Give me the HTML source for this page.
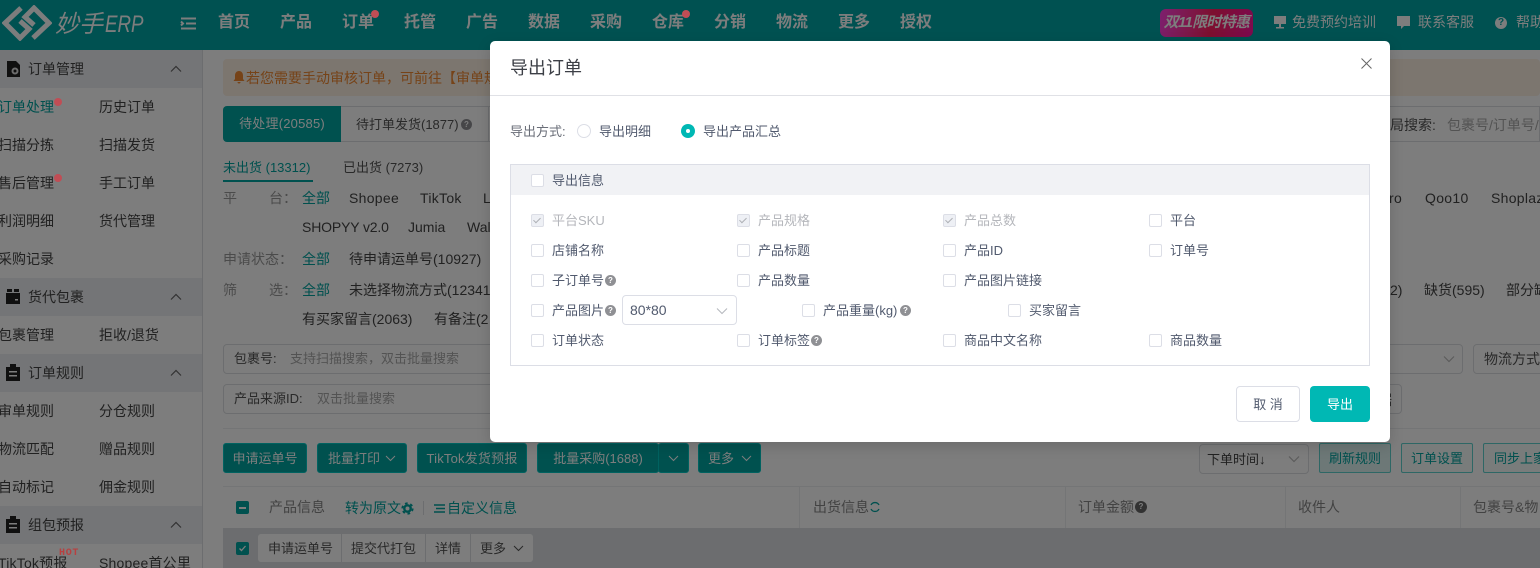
<!DOCTYPE html>
<html lang="zh">
<head>
<meta charset="utf-8">
<title>导出订单</title>
<style>
html,body{margin:0;padding:0;width:1540px;height:568px;overflow:hidden;background:#fff;}
body{position:relative;font-family:"Liberation Sans","Noto Sans CJK SC",sans-serif;font-size:14px;color:#555;}
.t{position:absolute;white-space:nowrap;line-height:20px;height:20px;margin-top:1px;}
.b{position:absolute;box-sizing:border-box;}
.s13{font-size:13px;}
.nav{color:#fff;font-size:16px;font-weight:700;top:12px;}
.top{color:#fff;font-size:14px;top:11px;}
.g{left:0;width:202px;height:38px;background:#eceef2;position:absolute;}
.m{color:#444;}
.tl{color:#00a4a0;}
.btn{position:absolute;box-sizing:border-box;height:30px;top:443px;background:#00a6a2;border:1px solid #00c8c4;border-radius:3px;color:#fff;font-size:13px;line-height:30px;text-align:center;white-space:nowrap;}
.out{position:absolute;box-sizing:border-box;height:30px;top:443px;background:#fff;border:1px solid #5fd2ce;border-radius:2px;color:#00a4a0;font-size:13px;line-height:30px;text-align:center;white-space:nowrap;overflow:hidden;}
.inp{position:absolute;box-sizing:border-box;border:1px solid #dcdee2;border-radius:4px;background:#fff;height:30px;}
.ov{position:absolute;left:0;top:0;width:1540px;height:568px;background:rgba(0,0,0,.51);}
.dlg{position:absolute;left:490px;top:41px;width:900px;height:401px;background:#fff;border-radius:5px;box-shadow:0 4px 14px rgba(0,0,0,.15);}
.cb{position:absolute;box-sizing:border-box;width:13px;height:13px;border:1px solid #dcdee6;border-radius:2px;background:#fff;}
.cb.dis{background:#eef0f5;}
.cb.dis:after{content:"";position:absolute;left:3px;top:1px;width:3px;height:6px;border:solid #aeb0b5;border-width:0 1px 1px 0;transform:rotate(45deg);}
.l{position:absolute;white-space:nowrap;font-size:13px;line-height:20px;height:20px;color:#515a6e;margin-top:1px;}
.l.dis{color:#b4b6bb;}
.q{position:absolute;width:11px;height:11px;border-radius:50%;background:#8f9094;color:#fff;font-size:8px;line-height:11px;text-align:center;font-weight:bold;}
.rdot{position:absolute;width:8px;height:8px;border-radius:50%;background:#c04d55;}
.chev{position:absolute;}
</style>
</head>
<body>
<!-- header -->
<div class="b" style="left:0;top:0;width:1540px;height:50px;background:#00a6a6;"></div>
<svg class="b" style="left:2px;top:5px;" width="50" height="36" viewBox="0 0 50 36" fill="none" stroke="#fff" stroke-width="5">
<path d="M19 3 L3 18 L18 33 L27 24 L18 16"/>
<path d="M31 33 L47 18 L32 3 L23 12 L32 20"/>
</svg>
<div class="t" style="left:55px;top:10px;font-size:24px;line-height:28px;height:28px;color:#fff;font-style:italic;">妙手<span style="display:inline-block;transform:scaleX(.78);transform-origin:left center;margin-left:2px;">ERP</span></div>
<svg class="b" style="left:180px;top:17px;" width="17" height="13" viewBox="0 0 17 13" fill="none" stroke="#fff" stroke-width="2"><path d="M1 1.500H16M6 6.500H16M1 11.500H16M1 4.500l2 2-2 2"/></svg>
<div class="t nav" style="left:218px;">首页</div>
<div class="t nav" style="left:280px;">产品</div>
<div class="t nav" style="left:342px;">订单</div>
<div class="t nav" style="left:404px;">托管</div>
<div class="t nav" style="left:466px;">广告</div>
<div class="t nav" style="left:528px;">数据</div>
<div class="t nav" style="left:590px;">采购</div>
<div class="t nav" style="left:652px;">仓库</div>
<div class="t nav" style="left:714px;">分销</div>
<div class="t nav" style="left:776px;">物流</div>
<div class="t nav" style="left:838px;">更多</div>
<div class="t nav" style="left:900px;">授权</div>
<div class="b" style="left:1160px;top:9px;width:93px;height:28px;border-radius:6px;background:linear-gradient(100deg,#ff40e0 0%,#ff3090 35%,#ff2060 55%,#ff14a0 100%);color:#fff;font-size:15px;font-weight:bold;font-style:italic;line-height:28px;text-align:center;white-space:nowrap;letter-spacing:-.7px;">双11限时特惠</div>
<svg class="b" style="left:1273px;top:15px;" width="14" height="15" viewBox="0 0 14 15" fill="#fff"><path d="M1 1h12v8H1z"/><path d="M6 9h2v3h3v1.500H3V12h3z"/></svg>
<div class="t top" style="left:1292px;">免费预约培训</div>
<svg class="b" style="left:1396px;top:15px;" width="15" height="15" viewBox="0 0 15 15" fill="#fff"><path d="M1 1h13v10H8l-3 3v-3H1z"/></svg>
<div class="t top" style="left:1418px;">联系客服</div>
<div class="b" style="left:1495px;top:17px;width:12px;height:12px;border-radius:50%;background:#fff;color:#00a6a6;font-size:10px;font-weight:bold;line-height:12px;text-align:center;">?</div>
<div class="t top" style="left:1516px;">帮助</div>

<!-- sidebar -->
<div class="b" style="left:202px;top:50px;width:1px;height:518px;background:#dcdee2;"></div>
<div class="g" style="top:50px;"></div>
<div class="g" style="top:278px;"></div>
<div class="g" style="top:354px;"></div>
<div class="g" style="top:506px;"></div>
<svg class="b" style="left:6px;top:60px;" width="15" height="18" viewBox="0 0 15 18"><path d="M1 1h9l4 4v12H1z" fill="#222"/><circle cx="9" cy="11" r="3.500" fill="#ddd"/><circle cx="9" cy="11" r="1.500" fill="#222"/></svg>
<svg class="b" style="left:5px;top:288px;" width="16" height="17" viewBox="0 0 16 17"><path d="M1 5h14v11H1z" fill="#222"/><path d="M2 1h5v3H2zM9 1h5v3H9z" fill="#222"/><path d="M10 11h3v1.500h-3z" fill="#fff"/></svg>
<svg class="b" style="left:6px;top:364px;" width="14" height="17" viewBox="0 0 14 17"><path d="M0 3h14v14H0z" fill="#222"/><path d="M4 0h6v3H4z" fill="#222"/><path d="M3 7h8v1.500H3zM3 11h8v1.500H3z" fill="#fff"/></svg>
<svg class="b" style="left:6px;top:516px;" width="14" height="17" viewBox="0 0 14 17"><path d="M0 3h14v14H0z" fill="#222"/><path d="M4 0h6v3H4z" fill="#222"/><path d="M3 7h8v1.500H3zM3 11h8v1.500H3z" fill="#fff"/></svg>
<div class="t m" style="left:28px;top:58px;">订单管理</div>
<div class="t m" style="left:28px;top:286px;">货代包裹</div>
<div class="t m" style="left:28px;top:362px;">订单规则</div>
<div class="t m" style="left:28px;top:514px;">组包预报</div>
<svg class="chev" style="left:170px;top:65px;" width="12" height="8" viewBox="0 0 12 8" fill="none" stroke="#666" stroke-width="1.2"><path d="M1 6.500l5-5 5 5"/></svg>
<svg class="chev" style="left:170px;top:293px;" width="12" height="8" viewBox="0 0 12 8" fill="none" stroke="#666" stroke-width="1.2"><path d="M1 6.500l5-5 5 5"/></svg>
<svg class="chev" style="left:170px;top:369px;" width="12" height="8" viewBox="0 0 12 8" fill="none" stroke="#666" stroke-width="1.2"><path d="M1 6.500l5-5 5 5"/></svg>
<svg class="chev" style="left:170px;top:521px;" width="12" height="8" viewBox="0 0 12 8" fill="none" stroke="#666" stroke-width="1.2"><path d="M1 6.500l5-5 5 5"/></svg>
<div class="t tl" style="left:-2px;top:96px;">订单处理</div>
<div class="t m" style="left:99px;top:96px;">历史订单</div>
<div class="t m" style="left:-2px;top:134px;">扫描分拣</div>
<div class="t m" style="left:99px;top:134px;">扫描发货</div>
<div class="t m" style="left:-2px;top:172px;">售后管理</div>
<div class="t m" style="left:99px;top:172px;">手工订单</div>
<div class="t m" style="left:-2px;top:210px;">利润明细</div>
<div class="t m" style="left:99px;top:210px;">货代管理</div>
<div class="t m" style="left:-2px;top:248px;">采购记录</div>
<div class="t m" style="left:-2px;top:324px;">包裹管理</div>
<div class="t m" style="left:99px;top:324px;">拒收/退货</div>
<div class="t m" style="left:-2px;top:400px;">审单规则</div>
<div class="t m" style="left:99px;top:400px;">分仓规则</div>
<div class="t m" style="left:-2px;top:438px;">物流匹配</div>
<div class="t m" style="left:99px;top:438px;">赠品规则</div>
<div class="t m" style="left:-2px;top:476px;">自动标记</div>
<div class="t m" style="left:99px;top:476px;">佣金规则</div>
<div class="t m" style="left:-2px;top:552px;letter-spacing:.2px;">TikTok预报</div>
<div class="t m" style="left:99px;top:552px;letter-spacing:.2px;">Shopee首公里</div>

<!-- main -->
<div class="b" style="left:223px;top:59px;width:1317px;height:37px;background:#fdf0e3;border-radius:4px;"></div>
<svg class="b" style="left:233px;top:71px;" width="12" height="13" viewBox="0 0 12 13" fill="#f08a32"><path d="M6 0c2.500 0 4 2 4 4.500V8l1.500 2H.5L2 8V4.500C2 2 3.500 0 6 0z"/><path d="M4.500 11h3a1.500 1.500 0 0 1-3 0z"/></svg>
<div class="t" style="left:246px;top:67px;font-size:14px;color:#f08a32;">若您需要手动审核订单，可前往【审单规则】</div>
<div class="b" style="left:223px;top:106px;width:118px;height:36px;background:#00a6a2;border-radius:4px 0 0 4px;color:#fff;font-size:13px;line-height:36px;text-align:center;letter-spacing:.2px;">待处理(20585)</div>
<div class="b" style="left:341px;top:106px;width:1199px;height:36px;border:1px solid #dcdee2;border-left:0;"></div>
<div class="b" style="left:488px;top:106px;width:1px;height:36px;background:#dcdee2;"></div>
<div class="t s13" style="left:356px;top:114px;">待打单发货(1877)</div>
<div class="q" style="left:461px;top:119px;">?</div>
<div class="t" style="left:1390px;top:114px;">局搜索:</div>
<div class="t" style="left:1447px;top:114px;color:#aaa;">包裹号/订单号/</div>
<div class="t s13 tl" style="left:223px;top:157px;">未出货 (13312)</div>
<div class="b" style="left:223px;top:180px;width:90px;height:2px;background:#00a6a2;"></div>
<div class="t s13" style="left:343px;top:157px;">已出货 (7273)</div>
<div class="t" style="left:223px;top:187px;color:#999;">平</div>
<div class="t" style="left:269px;top:187px;color:#999;">台：</div>
<div class="t tl" style="left:302px;top:187px;">全部</div>
<div class="t m" style="left:349px;top:187px;letter-spacing:.3px;">Shopee</div>
<div class="t m" style="left:420px;top:187px;letter-spacing:.3px;">TikTok</div>
<div class="t m" style="left:483px;top:187px;">L</div>
<div class="t m" style="left:1389px;top:187px;letter-spacing:.3px;">ro</div>
<div class="t m" style="left:1425px;top:187px;letter-spacing:.3px;">Qoo10</div>
<div class="t m" style="left:1491px;top:187px;letter-spacing:.3px;">Shoplaz</div>
<div class="t m" style="left:302px;top:216px;letter-spacing:-.15px;">SHOPYY v2.0</div>
<div class="t m" style="left:408px;top:216px;">Jumia</div>
<div class="t m" style="left:467px;top:216px;">Wal</div>
<div class="t" style="left:223px;top:248px;color:#999;">申请状态：</div>
<div class="t tl" style="left:302px;top:248px;">全部</div>
<div class="t m" style="left:349px;top:248px;">待申请运单号(10927)</div>
<div class="t" style="left:223px;top:279px;color:#999;">筛</div>
<div class="t" style="left:269px;top:279px;color:#999;">选：</div>
<div class="t tl" style="left:302px;top:279px;">全部</div>
<div class="t m" style="left:349px;top:279px;">未选择物流方式(12341</div>
<div class="t m" style="left:1390px;top:279px;">2)</div>
<div class="t m" style="left:1424px;top:279px;">缺货(595)</div>
<div class="t m" style="left:1506px;top:279px;">部分缺</div>
<div class="t m" style="left:302px;top:308px;">有买家留言(2063)</div>
<div class="t m" style="left:434px;top:308px;">有备注(2</div>

<div class="inp" style="left:223px;top:344px;width:1240px;"></div>
<div class="t s13" style="left:234px;top:348px;">包裹号:</div>
<div class="t s13" style="left:290px;top:348px;color:#aaa;">支持扫描搜索，双击批量搜索</div>
<svg class="chev" style="left:1443px;top:355px;" width="12" height="8" viewBox="0 0 12 8" fill="none" stroke="#bbb" stroke-width="1.2"><path d="M1 1.500l5 5 5-5"/></svg>
<div class="inp" style="left:1473px;top:344px;width:80px;"></div>
<div class="t" style="left:1484px;top:348px;">物流方式:</div>
<div class="inp" style="left:223px;top:384px;width:1179px;"></div>
<div class="t s13" style="left:234px;top:388px;">产品来源ID:</div>
<div class="t s13" style="left:317px;top:388px;color:#aaa;">双击批量搜索</div>
<div class="t" style="left:1378px;top:389px;">据</div>
<div class="b" style="left:223px;top:428px;width:1317px;height:1px;background:#eceef0;"></div>

<div class="btn" style="left:223px;width:84px;">申请运单号</div>
<div class="btn" style="left:317px;width:90px;text-align:left;padding-left:10px;">批量打印<svg style="position:absolute;left:67px;top:11px;" width="11" height="7" viewBox="0 0 11 7" fill="none" stroke="#fff"><path d="M1 1l4.500 4.500L10 1"/></svg></div>
<div class="btn" style="left:417px;width:110px;letter-spacing:.2px;">TikTok发货预报</div>
<div class="btn" style="left:537px;width:122px;">批量采购(1688)</div>
<div class="btn" style="left:658px;width:31px;"><svg style="position:absolute;left:9px;top:11px;" width="11" height="7" viewBox="0 0 11 7" fill="none" stroke="#fff"><path d="M1 1l4.500 4.500L10 1"/></svg></div>
<div class="btn" style="left:698px;width:63px;text-align:left;padding-left:9px;">更多<svg style="position:absolute;left:42px;top:11px;" width="11" height="7" viewBox="0 0 11 7" fill="none" stroke="#fff"><path d="M1 1l4.500 4.500L10 1"/></svg></div>

<div class="inp" style="left:1199px;top:444px;width:110px;"></div>
<div class="t s13" style="left:1207px;top:449px;color:#444;">下单时间↓</div>
<svg class="chev" style="left:1288px;top:455px;" width="12" height="8" viewBox="0 0 12 8" fill="none" stroke="#bbb" stroke-width="1.2"><path d="M1 1.500l5 5 5-5"/></svg>
<div class="out" style="left:1319px;width:72px;background:#dff5f3;">刷新规则</div>
<div class="out" style="left:1401px;width:72px;background:#f6fcfb;">订单设置</div>
<div class="out" style="left:1483px;width:90px;text-align:left;padding-left:10px;background:#f6fcfb;">同步上家</div>

<div class="b" style="left:223px;top:486px;width:1317px;height:42px;background:#fff;border-top:1px solid #eceef0;"></div>
<div class="b" style="left:236px;top:501px;width:13px;height:13px;background:#00a6a2;border-radius:2px;"></div>
<div class="b" style="left:239px;top:507px;width:7px;height:1.500px;background:#fff;"></div>
<div class="t" style="left:269px;top:496px;color:#888;">产品信息</div>
<div class="t tl" style="left:345px;top:497px;">转为原文</div>
<svg class="b" style="left:401px;top:502px;" width="13" height="13" viewBox="0 0 13 13" fill="none" stroke="#00a4a0"><circle cx="6.500" cy="6.500" r="3.200" stroke-width="2.400"/><circle cx="6.500" cy="6.500" r="5.200" stroke-width="1.800" stroke-dasharray="2.700 2.750"/></svg>
<div class="b" style="left:423px;top:501px;width:1px;height:14px;background:#dcdee2;"></div>
<svg class="b" style="left:434px;top:503px;" width="11" height="11" viewBox="0 0 11 11" fill="none" stroke="#00a4a0" stroke-width="1.600"><path d="M0 2h11M2 5.500h9M0 9h11"/></svg>
<div class="t tl" style="left:447px;top:497px;">自定义信息</div>
<div class="b" style="left:799px;top:487px;width:1px;height:41px;background:#eceef0;"></div>
<div class="t" style="left:813px;top:496px;color:#888;">出货信息</div>
<svg class="b" style="left:869px;top:501px;" width="12" height="12" viewBox="0 0 12 12" fill="none" stroke="#00a4a0" stroke-width="1.300"><path d="M10 4A4.500 4.500 0 0 0 2 4M2 8a4.500 4.500 0 0 0 8 0"/></svg>
<div class="b" style="left:1065px;top:487px;width:1px;height:41px;background:#eceef0;"></div>
<div class="t" style="left:1078px;top:496px;color:#888;">订单金额</div>
<div class="q" style="left:1135px;top:501px;width:12px;height:12px;line-height:12px;background:#666;">?</div>
<div class="b" style="left:1285px;top:487px;width:1px;height:41px;background:#eceef0;"></div>
<div class="t" style="left:1298px;top:496px;color:#888;">收件人</div>
<div class="b" style="left:1460px;top:487px;width:1px;height:41px;background:#eceef0;"></div>
<div class="t" style="left:1473px;top:496px;color:#888;">包裹号&amp;物</div>

<div class="b" style="left:223px;top:528px;width:1317px;height:40px;background:#dcdee3;"></div>
<div class="b" style="left:236px;top:542px;width:13px;height:13px;background:#00a6a2;border-radius:2px;"></div>
<svg class="b" style="left:236px;top:542px;" width="13" height="13" viewBox="0 0 13 13" fill="none" stroke="#fff" stroke-width="1.300"><path d="M3.500 6.500l2 2 4-4.500"/></svg>
<div class="b" style="left:258px;top:534px;width:275px;height:28px;background:#fff;border-radius:3px;"></div>
<div class="b" style="left:341px;top:534px;width:1px;height:28px;background:#dcdee3;"></div>
<div class="b" style="left:425px;top:534px;width:1px;height:28px;background:#dcdee3;"></div>
<div class="b" style="left:470px;top:534px;width:1px;height:28px;background:#dcdee3;"></div>
<div class="t s13" style="left:268px;top:538px;">申请运单号</div>
<div class="t s13" style="left:351px;top:538px;">提交代打包</div>
<div class="t s13" style="left:435px;top:538px;">详情</div>
<div class="t s13" style="left:480px;top:538px;">更多</div>
<svg class="chev" style="left:513px;top:545px;" width="11" height="7" viewBox="0 0 11 7" fill="none" stroke="#555"><path d="M1 1l4.500 4.500L10 1"/></svg>

<!-- overlay -->
<div class="ov"></div>

<!-- dots & hot drawn brighter -->
<div class="rdot" style="left:371px;top:10px;"></div>
<div class="rdot" style="left:682px;top:10px;"></div>
<div class="rdot" style="left:54px;top:98px;"></div>
<div class="rdot" style="left:54px;top:174px;"></div>
<div class="t" style="left:59px;top:547px;font-family:'Liberation Mono',monospace;font-size:10px;font-weight:bold;color:#b84040;letter-spacing:.7px;height:12px;line-height:12px;">HOT</div>

<!-- dialog -->
<div class="dlg"></div>
<div class="t" style="left:510px;top:55px;height:24px;line-height:24px;font-size:18px;color:#3c3f46;">导出订单</div>
<svg class="b" style="left:1361px;top:58px;" width="11" height="11" viewBox="0 0 11 11" fill="none" stroke="#666" stroke-width="1"><path d="M.5.5l10 10M10.500 .5l-10 10"/></svg>
<div class="b" style="left:490px;top:95px;width:900px;height:1px;background:#e0e1e6;"></div>
<div class="l" style="left:510px;top:121px;color:#6a6e78;">导出方式:</div>
<div class="b" style="left:577px;top:124px;width:14px;height:14px;border:1px solid #dcdee6;border-radius:50%;"></div>
<div class="l" style="left:599px;top:121px;">导出明细</div>
<div class="b" style="left:681px;top:124px;width:14px;height:14px;background:#00b8b4;border-radius:50%;"></div>
<div class="b" style="left:686px;top:129px;width:4px;height:4px;background:#fff;border-radius:50%;"></div>
<div class="l" style="left:703px;top:121px;">导出产品汇总</div>

<div class="b" style="left:510px;top:164px;width:860px;height:202px;border:1px solid #dcdee6;"></div>
<div class="b" style="left:511px;top:165px;width:858px;height:30px;background:#f1f2f5;"></div>
<div class="cb" style="left:531px;top:174px;"></div><div class="l" style="left:552px;top:170px;">导出信息</div>

<div class="cb dis" style="left:531px;top:214px;"></div><div class="l dis" style="left:552px;top:210px;">平台SKU</div>
<div class="cb dis" style="left:737px;top:214px;"></div><div class="l dis" style="left:758px;top:210px;">产品规格</div>
<div class="cb dis" style="left:943px;top:214px;"></div><div class="l dis" style="left:964px;top:210px;">产品总数</div>
<div class="cb" style="left:1149px;top:214px;"></div><div class="l" style="left:1170px;top:210px;">平台</div>

<div class="cb" style="left:531px;top:244px;"></div><div class="l" style="left:552px;top:240px;">店铺名称</div>
<div class="cb" style="left:737px;top:244px;"></div><div class="l" style="left:758px;top:240px;">产品标题</div>
<div class="cb" style="left:943px;top:244px;"></div><div class="l" style="left:964px;top:240px;">产品ID</div>
<div class="cb" style="left:1149px;top:244px;"></div><div class="l" style="left:1170px;top:240px;">订单号</div>

<div class="cb" style="left:531px;top:274px;"></div><div class="l" style="left:552px;top:270px;">子订单号</div><div class="q" style="left:605px;top:275px;">?</div>
<div class="cb" style="left:737px;top:274px;"></div><div class="l" style="left:758px;top:270px;">产品数量</div>
<div class="cb" style="left:943px;top:274px;"></div><div class="l" style="left:964px;top:270px;">产品图片链接</div>

<div class="cb" style="left:531px;top:304px;"></div><div class="l" style="left:552px;top:300px;">产品图片</div><div class="q" style="left:605px;top:305px;">?</div>
<div class="b" style="left:622px;top:295px;width:115px;height:30px;border:1px solid #dcdee6;border-radius:4px;"></div>
<div class="t" style="left:630px;top:299px;font-size:14px;color:#515a6e;">80*80</div>
<svg class="chev" style="left:716px;top:307px;" width="12" height="8" viewBox="0 0 12 8" fill="none" stroke="#b5b7bd" stroke-width="1"><path d="M1 1.500l5 5 5-5"/></svg>
<div class="cb" style="left:802px;top:304px;"></div><div class="l" style="left:823px;top:300px;">产品重量(kg)</div><div class="q" style="left:900px;top:305px;">?</div>
<div class="cb" style="left:1008px;top:304px;"></div><div class="l" style="left:1029px;top:300px;">买家留言</div>

<div class="cb" style="left:531px;top:334px;"></div><div class="l" style="left:552px;top:330px;">订单状态</div>
<div class="cb" style="left:737px;top:334px;"></div><div class="l" style="left:758px;top:330px;">订单标签</div><div class="q" style="left:811px;top:335px;">?</div>
<div class="cb" style="left:943px;top:334px;"></div><div class="l" style="left:964px;top:330px;">商品中文名称</div>
<div class="cb" style="left:1149px;top:334px;"></div><div class="l" style="left:1170px;top:330px;">商品数量</div>

<div class="b" style="left:1236px;top:386px;width:64px;height:36px;border:1px solid #dcdee6;border-radius:4px;background:#fff;color:#515a6e;font-size:13px;line-height:36px;text-align:center;">取 消</div>
<div class="b" style="left:1310px;top:386px;width:60px;height:36px;border-radius:4px;background:#00b8b4;color:#fff;font-size:13px;line-height:38px;text-align:center;">导出</div>
</body>
</html>
